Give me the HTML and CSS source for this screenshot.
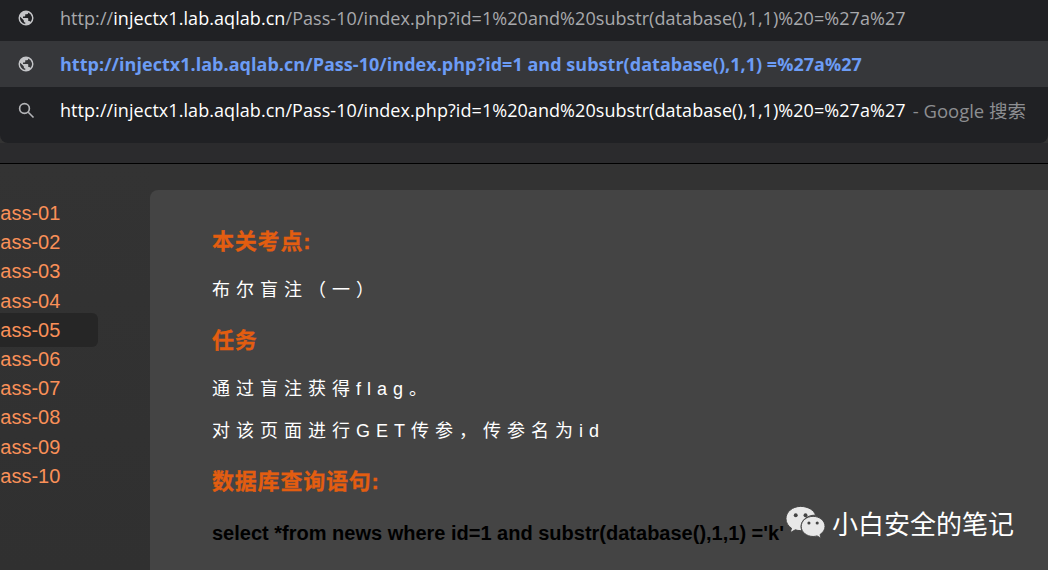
FILE: index.html
```html
<!DOCTYPE html>
<html>
<head>
    <title>Pass-10</title>
    <link rel="stylesheet" href="styles.css">
</head>
<body>
    <div class="omnibox">
        <div class="row row-first">
            <svg class="icon" viewBox="0 0 24 24"><path d="M12 2a10 10 0 1 0 0 20 10 10 0 0 0 0-20zm-1 17.900A8 8 0 0 1 4.200 10.200L9 15v1c0 1.100.9 2 2 2v1.900zm6.900-2.500A2 2 0 0 0 16 16h-1v-3a1 1 0 0 0-1-1H8v-2h2a1 1 0 0 0 1-1V7h2a2 2 0 0 0 2-2v-.4a8 8 0 0 1 2.900 12.800z"/></svg>
            <span class="url dim">http://<b class="host">injectx1.lab.aqlab.cn</b>/Pass-10/index.php?id=1%20and%20substr(database(),1,1)%20=%27a%27</span>
        </div>
        <div class="row row-active">
            <svg class="icon" viewBox="0 0 24 24"><path d="M12 2a10 10 0 1 0 0 20 10 10 0 0 0 0-20zm-1 17.900A8 8 0 0 1 4.200 10.200L9 15v1c0 1.100.9 2 2 2v1.900zm6.900-2.500A2 2 0 0 0 16 16h-1v-3a1 1 0 0 0-1-1H8v-2h2a1 1 0 0 0 1-1V7h2a2 2 0 0 0 2-2v-.4a8 8 0 0 1 2.900 12.800z"/></svg>
            <span class="url link">http://injectx1.lab.aqlab.cn/Pass-10/index.php?id=1 and substr(database(),1,1) =%27a%27</span>
        </div>
        <div class="row row-search">
            <svg class="icon icon-search" viewBox="0 0 24 24"><circle cx="10" cy="10" r="6.500"/><path d="M15 15l7 7"/></svg>
            <span class="url">http://injectx1.lab.aqlab.cn/Pass-10/index.php?id=1%20and%20substr(database(),1,1)%20=%27a%27</span>
            <span class="suffix">- Google 搜索</span>
        </div>
    </div>
    <div class="shade"></div>

    <div class="page">
        <ul class="sidebar">
            <li>Pass-01</li>
            <li>Pass-02</li>
            <li>Pass-03</li>
            <li>Pass-04</li>
            <li class="current">Pass-05</li>
            <li>Pass-06</li>
            <li>Pass-07</li>
            <li>Pass-08</li>
            <li>Pass-09</li>
            <li>Pass-10</li>
        </ul>
        <div class="panel">
            <h2>本关考点:</h2>
            <p>布尔盲注（一）</p>
            <h2>任务</h2>
            <p>通过盲注获得flag。</p>
            <p>对该页面进行GET传参，传参名为id</p>
            <h2>数据库查询语句:</h2>
            <p class="sql">select *from news where id=1 and substr(database(),1,1) ='k'</p>
        </div>
    </div>

    <div class="watermark">
        <svg class="wechat" viewBox="0 0 42 36">
            <path class="bubble" d="M16 1C7.700 1 1 6.600 1 13.600c0 4 2.200 7.500 5.700 9.800L5.200 28l5.300-3c1.700.5 3.600.8 5.500.8h1.200c-.5-1.300-.7-2.600-.7-4 0-6.600 6.200-11.800 13.800-11.800h1C29.800 4.800 23.500 1 16 1z"/>
            <circle class="eye" cx="11" cy="10" r="2"/>
            <circle class="eye" cx="21" cy="10" r="2"/>
            <path class="bubble" d="M41 21.500c0-5.700-5.500-10.300-12.200-10.300S16.600 15.800 16.600 21.500s5.500 10.300 12.200 10.300c1.400 0 2.800-.2 4-.6l4.200 2.400-1.100-3.800c3-2 5.100-5 5.100-8.300z"/>
            <circle class="eye" cx="24.500" cy="18" r="1.600"/>
            <circle class="eye" cx="33" cy="18" r="1.600"/>
        </svg>
        <span>小白安全的笔记</span>
    </div>
</body>
</html>
```

FILE: styles.css
```css
html, body { margin: 0; height: 570px; overflow: hidden; }
body { background: #333; font-family: "Liberation Sans", "Noto Sans CJK SC", sans-serif; position: relative; }

.omnibox { background: #202124; height: 143px; border-radius: 0 0 8px 8px; }
.row { display: flex; align-items: center; padding-left: 17px; font-family: "Open Sans", "Noto Sans CJK SC", sans-serif; }
.row-first { height: 41px; padding-bottom: 5px; box-sizing: border-box; }
.row-active { height: 46px; background: #36373a; }
.row-search { height: 46px; }

.icon { width: 18px; height: 18px; margin-right: 25px; fill: #c4c5c8; flex: none; }
.icon-search { fill: none; stroke: #b4b5b8; stroke-width: 2.2; }

.url { font-size: 18px; letter-spacing: 0.06px; color: #fff; white-space: nowrap; }
.dim { color: #a8a9ac; }
.host { font-weight: normal; color: #fff; }
.link { color: #6c9cf5; font-weight: 700; letter-spacing: 0.03px; }
.suffix { margin-left: 7px; font-size: 18.5px; color: #8d8e91; white-space: nowrap; }

.shade { height: 20px; background: #2b2b2d; border-bottom: 1px solid #000; }

.page { display: flex; height: 406px; }
.sidebar { list-style: none; margin: 0; padding: 35px 0 0; width: 150px; flex: none; background: linear-gradient(#333, #303030); overflow: hidden; box-sizing: border-box; }
.sidebar li { width: 111px; margin-left: -13px; height: 29.2px; line-height: 29.2px; font-size: 20px; color: #fa9058; }
.sidebar .current { background: #262626; height: 34px; line-height: 34px; margin: -2.4px 0 -2.4px -13px; border-radius: 6px; }

.panel { flex: 1; background: #444; border-radius: 8px 0 0 0; margin-top: 26px; padding: 14px 0 0 62px; }
.panel h2 { margin: 23px 0 20px; font-size: 22px; letter-spacing: 0.8px; line-height: 30px; color: #e35d10; font-weight: 700; -webkit-text-stroke: 0.3px #e35d10; }
.panel p { margin: 0 0 16px; font-size: 18px; letter-spacing: 6px; line-height: 26px; color: #fff; }
.panel .sql { margin-top: 23px; font-size: 20px; letter-spacing: 0; font-weight: 700; color: #000; }

.watermark { position: absolute; left: 785px; top: 504px; display: flex; align-items: center; gap: 6px; color: #fff; font-size: 26px; font-family: "Noto Sans CJK SC", sans-serif; }
.wechat { width: 41px; height: 36px; }
.bubble { fill: #e8e8e8; stroke: #444; stroke-width: 1; }
.eye { fill: #444; }
```
